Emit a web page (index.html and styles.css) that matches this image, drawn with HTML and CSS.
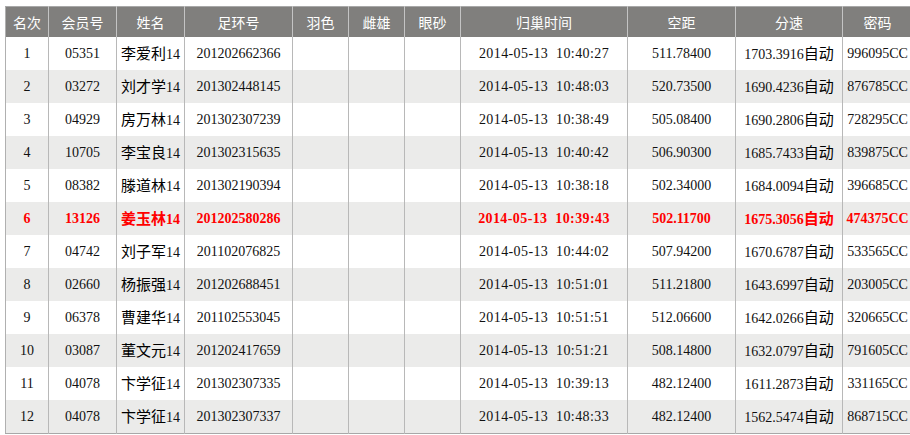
FILE: index.html
```html
<!DOCTYPE html>
<html lang="zh-CN">
<head>
<meta charset="utf-8">
<title>成绩</title>
<link rel="stylesheet" href="styles.css">
</head>
<body>
<table class="results">
  <colgroup>
    <col class="c-rank"><col class="c-member"><col class="c-name"><col class="c-ring">
    <col class="c-small"><col class="c-small"><col class="c-small">
    <col class="c-time"><col class="c-dist"><col class="c-speed"><col class="c-code">
  </colgroup>
  <thead>
    <tr><th>名次</th><th>会员号</th><th>姓名</th><th>足环号</th><th>羽色</th><th>雌雄</th><th>眼砂</th><th>归巢时间</th><th>空距</th><th>分速</th><th>密码</th></tr>
  </thead>
  <tbody>
    <tr><td>1</td><td>05351</td><td><span class="cjk">李爱利</span>14</td><td>201202662366</td><td></td><td></td><td></td><td class="time">2014-05-13&nbsp;&nbsp;10:40:27</td><td>511.78400</td><td>1703.3916<span class="cjk">自动</span></td><td>996095CC</td></tr>
    <tr><td>2</td><td>03272</td><td><span class="cjk">刘才学</span>14</td><td>201302448145</td><td></td><td></td><td></td><td class="time">2014-05-13&nbsp;&nbsp;10:48:03</td><td>520.73500</td><td>1690.4236<span class="cjk">自动</span></td><td>876785CC</td></tr>
    <tr><td>3</td><td>04929</td><td><span class="cjk">房万林</span>14</td><td>201302307239</td><td></td><td></td><td></td><td class="time">2014-05-13&nbsp;&nbsp;10:38:49</td><td>505.08400</td><td>1690.2806<span class="cjk">自动</span></td><td>728295CC</td></tr>
    <tr><td>4</td><td>10705</td><td><span class="cjk">李宝良</span>14</td><td>201302315635</td><td></td><td></td><td></td><td class="time">2014-05-13&nbsp;&nbsp;10:40:42</td><td>506.90300</td><td>1685.7433<span class="cjk">自动</span></td><td>839875CC</td></tr>
    <tr><td>5</td><td>08382</td><td><span class="cjk">滕道林</span>14</td><td>201302190394</td><td></td><td></td><td></td><td class="time">2014-05-13&nbsp;&nbsp;10:38:18</td><td>502.34000</td><td>1684.0094<span class="cjk">自动</span></td><td>396685CC</td></tr>
    <tr class="mine"><td>6</td><td>13126</td><td><span class="cjk">姜玉林</span>14</td><td>201202580286</td><td></td><td></td><td></td><td class="time">2014-05-13&nbsp;&nbsp;10:39:43</td><td>502.11700</td><td>1675.3056<span class="cjk">自动</span></td><td>474375CC</td></tr>
    <tr><td>7</td><td>04742</td><td><span class="cjk">刘子军</span>14</td><td>201102076825</td><td></td><td></td><td></td><td class="time">2014-05-13&nbsp;&nbsp;10:44:02</td><td>507.94200</td><td>1670.6787<span class="cjk">自动</span></td><td>533565CC</td></tr>
    <tr><td>8</td><td>02660</td><td><span class="cjk">杨振强</span>14</td><td>201202688451</td><td></td><td></td><td></td><td class="time">2014-05-13&nbsp;&nbsp;10:51:01</td><td>511.21800</td><td>1643.6997<span class="cjk">自动</span></td><td>203005CC</td></tr>
    <tr><td>9</td><td>06378</td><td><span class="cjk">曹建华</span>14</td><td>201102553045</td><td></td><td></td><td></td><td class="time">2014-05-13&nbsp;&nbsp;10:51:51</td><td>512.06600</td><td>1642.0266<span class="cjk">自动</span></td><td>320665CC</td></tr>
    <tr><td>10</td><td>03087</td><td><span class="cjk">董文元</span>14</td><td>201202417659</td><td></td><td></td><td></td><td class="time">2014-05-13&nbsp;&nbsp;10:51:21</td><td>508.14800</td><td>1632.0797<span class="cjk">自动</span></td><td>791605CC</td></tr>
    <tr><td>11</td><td>04078</td><td><span class="cjk">卞学征</span>14</td><td>201302307335</td><td></td><td></td><td></td><td class="time">2014-05-13&nbsp;&nbsp;10:39:13</td><td>482.12400</td><td>1611.2873<span class="cjk">自动</span></td><td>331165CC</td></tr>
    <tr><td>12</td><td>04078</td><td><span class="cjk">卞学征</span>14</td><td>201302307337</td><td></td><td></td><td></td><td class="time">2014-05-13&nbsp;&nbsp;10:48:33</td><td>482.12400</td><td>1562.5474<span class="cjk">自动</span></td><td>868715CC</td></tr>
  </tbody>
</table>
</body>
</html>
```

FILE: styles.css
```css
html, body {
  margin: 0;
  padding: 0;
  background: #ffffff;
  overflow: hidden;
}
body {
  padding: 6px 0 0 5px;
  font-family: "Liberation Serif", "Noto Sans CJK SC", serif;
  font-size: 14px;
  color: #111111;
}
.results {
  border-collapse: collapse;
  table-layout: fixed;
  width: 906px;
  border-top: 1px solid #a8a8a8;
  border-bottom: 1px solid #a8a8a8;
  border-left: 1px solid #b0b0b0;
}
.c-rank { width: 43px; }
.c-member { width: 68px; }
.c-name { width: 68px; }
.c-ring { width: 108px; }
.c-small { width: 56px; }
.c-time { width: 167px; }
.c-dist { width: 108px; }
.c-speed { width: 107px; }
.c-code { width: 70px; }

.results th {
  height: 30px;
  padding: 0;
  background: #807f7d;
  color: #ffffff;
  font-family: "Noto Sans CJK SC", sans-serif;
  font-weight: normal;
  font-size: 14px;
  line-height: 18px;
  text-align: center;
  border-right: 1px solid #c4c4c4;
}
.results td {
  height: 33px;
  padding: 0;
  text-align: center;
  vertical-align: middle;
  line-height: 18px;
  white-space: nowrap;
  border-right: 1px solid #b8b8b8;
}
.results tbody tr:nth-child(even) td {
  background: #ebebea;
}
.cjk {
  font-family: "Noto Sans CJK SC", sans-serif;
  font-size: 15px;
  color: #000000;
}
.time {
  letter-spacing: 0.4px;
}
.mine td, .mine .cjk {
  color: #ff0000;
  font-weight: bold;
}
```
